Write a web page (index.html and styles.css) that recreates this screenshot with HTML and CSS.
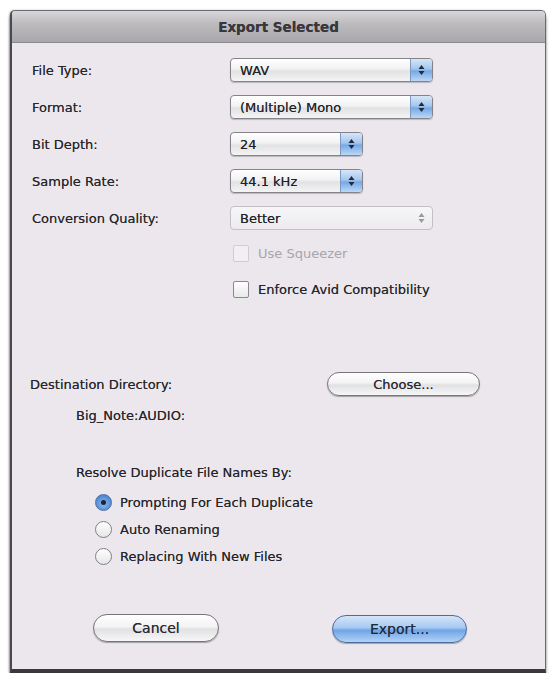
FILE: index.html
```html
<!DOCTYPE html>
<html>
<head>
<meta charset="utf-8">
<title>Export Selected</title>
<link rel="stylesheet" href="styles.css">
</head>
<body>
<div class="window">
  <div class="titlebar">Export Selected</div>
  <div class="content">
    <div class="form-grid">
      <div class="label">File Type:</div>
      <div class="select long"><span class="value">WAV</span><span class="arrows"><svg width="9" height="14" viewBox="0 0 9 14"><path d="M4.5 2 L7.5 6 H1.5 Z M4.5 12 L7.5 8 H1.5 Z" fill="#1f2a3a"/></svg></span></div>

      <div class="label">Format:</div>
      <div class="select long"><span class="value">(Multiple) Mono</span><span class="arrows"><svg width="9" height="14" viewBox="0 0 9 14"><path d="M4.5 2 L7.5 6 H1.5 Z M4.5 12 L7.5 8 H1.5 Z" fill="#1f2a3a"/></svg></span></div>

      <div class="label">Bit Depth:</div>
      <div class="select short"><span class="value">24</span><span class="arrows"><svg width="9" height="14" viewBox="0 0 9 14"><path d="M4.5 2 L7.5 6 H1.5 Z M4.5 12 L7.5 8 H1.5 Z" fill="#1f2a3a"/></svg></span></div>

      <div class="label">Sample Rate:</div>
      <div class="select short"><span class="value">44.1 kHz</span><span class="arrows"><svg width="9" height="14" viewBox="0 0 9 14"><path d="M4.5 2 L7.5 6 H1.5 Z M4.5 12 L7.5 8 H1.5 Z" fill="#1f2a3a"/></svg></span></div>

      <div class="label">Conversion Quality:</div>
      <div class="select long disabled"><span class="value">Better</span><span class="arrows"><svg width="9" height="14" viewBox="0 0 9 14"><path d="M4.5 2 L7.5 6 H1.5 Z M4.5 12 L7.5 8 H1.5 Z" fill="#9a9a9a"/></svg></span></div>
    </div>

    <div class="checks">
      <div class="check-row disabled"><span class="checkbox"></span><span>Use Squeezer</span></div>
      <div class="check-row"><span class="checkbox"></span><span>Enforce Avid Compatibility</span></div>
    </div>

    <div class="dest-row">
      <div class="label">Destination Directory:</div>
      <div class="button choose">Choose...</div>
    </div>
    <div class="path">Big_Note:AUDIO:</div>

    <div class="resolve">
      <div class="resolve-title">Resolve Duplicate File Names By:</div>
      <div class="radios">
        <div class="radio-row"><span class="radio selected"><span class="dot"></span></span><span>Prompting For Each Duplicate</span></div>
        <div class="radio-row"><span class="radio"></span><span>Auto Renaming</span></div>
        <div class="radio-row"><span class="radio"></span><span>Replacing With New Files</span></div>
      </div>
    </div>

    <div class="buttons">
      <div class="button cancel">Cancel</div>
      <div class="button export">Export...</div>
    </div>
  </div>
</div>
</body>
</html>
```

FILE: styles.css
```css
html, body {
  margin: 0;
  padding: 0;
  background: #ffffff;
}

body {
  font-family: "DejaVu Sans", "Liberation Sans", sans-serif;
  font-size: 13px;
  color: #262529;
  text-shadow: 0 0 0.6px rgba(30, 30, 34, 0.7);
}

.window {
  margin: 10px 0 0 10px;
  width: 533px;
  height: 658px;
  background: #ebe7ed;
  border: 1px solid #6b6a6e;
  border-left: 2px solid #4a494d;
  border-bottom: 4px solid #39383c;
  border-radius: 5px 5px 0 0;
  box-shadow: 0 4px 3px rgba(0,0,0,0.55), -1px 0 2px rgba(0,0,0,0.25);
  display: flex;
  flex-direction: column;
  overflow: hidden;
}

.titlebar {
  height: 31px;
  flex: none;
  display: flex;
  align-items: center;
  justify-content: center;
  font-weight: bold;
  font-size: 13.5px;
  color: #38373b;
  background: linear-gradient(#d9d7da 0%, #bdbbbe 40%, #a9a7ab 100%);
  border-bottom: 1px solid #8c8a8e;
}

.content {
  flex: 1;
  display: flex;
  flex-direction: column;
  padding: 15px 0 0 20px;
}

.form-grid {
  display: grid;
  grid-template-columns: 198px auto;
  row-gap: 13px;
  align-items: center;
}

.select {
  height: 22px;
  display: flex;
  align-items: stretch;
  border: 1px solid #85838a;
  border-radius: 4px;
  background: linear-gradient(#ffffff 0%, #f2f2f3 45%, #e2e2e4 55%, #f4f4f5 100%);
  box-shadow: 0 1px 1px rgba(0,0,0,0.2);
  overflow: hidden;
}

.select.long { width: 201px; }
.select.short { width: 131px; }

.select .value {
  flex: 1;
  display: flex;
  align-items: center;
  padding-left: 9px;
  color: #222126;
}

.select .arrows {
  width: 21px;
  display: flex;
  align-items: center;
  justify-content: center;
  border-left: 1px solid #7c99c2;
  background: linear-gradient(#d6e6f8 0%, #a4c6ef 45%, #76a8e5 55%, #bcd8f6 100%);
}

.select.disabled {
  border-color: #c2c0c5;
  box-shadow: none;
  background: linear-gradient(#f6f5f7, #eceaee);
}

.select.disabled .arrows {
  background: transparent;
  border-left: none;
}

.checks {
  display: flex;
  flex-direction: column;
  gap: 19px;
  margin: 15px 0 0 201px;
}

.check-row {
  display: flex;
  align-items: center;
  gap: 9px;
}

.checkbox {
  width: 14px;
  height: 15px;
  border: 1px solid #8a888d;
  border-radius: 2px;
  background: linear-gradient(#ffffff, #e9e9ea);
  flex: none;
}

.check-row.disabled {
  color: #a7a5aa;
  text-shadow: none;
}

.check-row.disabled .checkbox {
  border-color: #cfcdd2;
  background: #f1eff2;
}

.dest-row {
  display: flex;
  align-items: center;
  margin-top: 74px;
  width: 450px;
  justify-content: space-between;
  margin-left: -2px;
}

.button {
  display: flex;
  align-items: center;
  justify-content: center;
  border: 1px solid #77757a;
  border-radius: 14px;
  background: linear-gradient(#ffffff 0%, #f3f3f4 45%, #e1e1e3 55%, #f7f7f8 100%);
  box-shadow: 0 1px 1px rgba(0,0,0,0.3);
  color: #2a292d;
}

.button.choose {
  width: 151px;
  height: 22px;
  border-radius: 12px;
}

.path {
  margin: 12px 0 0 44px;
}

.resolve {
  margin: 42px 0 0 44px;
  display: flex;
  flex-direction: column;
}

.radios {
  display: flex;
  flex-direction: column;
  gap: 10px;
  margin: 14px 0 0 19px;
}

.radio-row {
  display: flex;
  align-items: center;
  gap: 8px;
}

.radio {
  width: 15px;
  height: 15px;
  border: 1px solid #808084;
  border-radius: 50%;
  background: linear-gradient(#ffffff, #e6e6e8);
  display: flex;
  align-items: center;
  justify-content: center;
  flex: none;
}

.radio.selected {
  border-color: #4a6ea3;
  background: radial-gradient(circle at 50% 60%, #8cb9ef 0%, #5a8fd6 60%, #3f71b8 100%);
}

.radio .dot {
  width: 5px;
  height: 5px;
  border-radius: 50%;
  background: #1b2536;
}

.buttons {
  display: flex;
  margin: 47px 0 0 61px;
  gap: 113px;
  align-items: center;
}

.button.cancel {
  width: 124px;
  height: 26px;
  font-size: 14px;
}

.button.export {
  width: 133px;
  height: 26px;
  font-size: 14px;
  margin-top: 3px;
  border-color: #4d6d9e;
  background: linear-gradient(#d4e5f9 0%, #a5c9f2 45%, #6fa4e6 55%, #b2d3f6 100%);
  color: #1f2a3c;
}
```
